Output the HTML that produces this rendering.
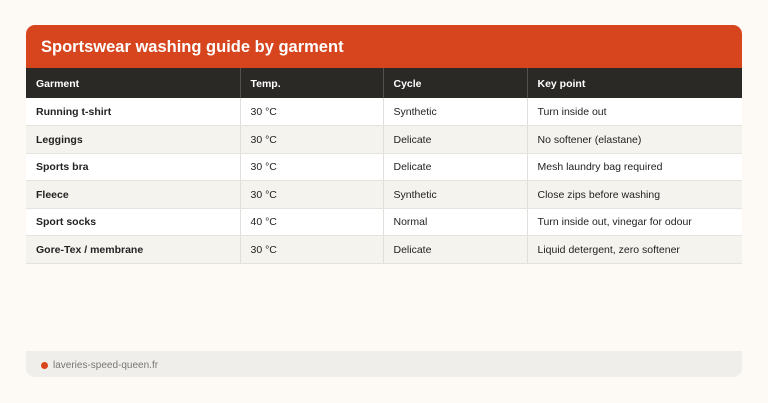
<!DOCTYPE html>
<html><head><style>
body{margin:0;width:768px;height:403px;background:#fdfaf6;font-family:"Liberation Sans",sans-serif;position:relative;overflow:hidden}
.hd{position:absolute;left:26px;top:25px;width:716px;height:43px;background:#d7451f;border-radius:9px 9px 0 0;color:#fff;font-weight:bold;font-size:16.5px;line-height:45px;box-sizing:border-box;padding-left:15px}
table{position:absolute;left:26px;top:68px;width:716px;border-collapse:collapse;font-size:10.5px;color:#222}
td,th{height:27.5px;padding:1px 0 0 10px;text-align:left;border-right:1px solid #e2dfda;border-bottom:1px solid #e6e3de;box-sizing:border-box}
th{background:#2b2926;color:#fff;font-weight:bold;height:30px;border-right:1px solid #55524d;border-bottom:none}
td:last-child,th:last-child{border-right:none}
tr:nth-child(odd) td{background:#f5f3ee}
tr:nth-child(even) td{background:#fff}
td:first-child{font-weight:bold}
.ft{position:absolute;left:26px;top:351px;width:716px;height:26px;background:#f0eeea;border-radius:0 0 9px 9px;font-size:10px;color:#777;line-height:29px;box-sizing:border-box;padding-left:27px}
.ft:before{content:"";position:absolute;left:15px;top:11px;width:7px;height:7px;border-radius:50%;background:#d7451f}
</style></head><body>
<div class="hd">Sportswear washing guide by garment</div>
<table>
<tr><th style="width:214px">Garment</th><th style="width:143px">Temp.</th><th style="width:144px">Cycle</th><th>Key point</th></tr>
<tr><td>Running t-shirt</td><td>30 °C</td><td>Synthetic</td><td>Turn inside out</td></tr>
<tr><td>Leggings</td><td>30 °C</td><td>Delicate</td><td>No softener (elastane)</td></tr>
<tr><td>Sports bra</td><td>30 °C</td><td>Delicate</td><td>Mesh laundry bag required</td></tr>
<tr><td>Fleece</td><td>30 °C</td><td>Synthetic</td><td>Close zips before washing</td></tr>
<tr><td>Sport socks</td><td>40 °C</td><td>Normal</td><td>Turn inside out, vinegar for odour</td></tr>
<tr><td>Gore-Tex / membrane</td><td>30 °C</td><td>Delicate</td><td>Liquid detergent, zero softener</td></tr>
</table>
<div class="ft">laveries-speed-queen.fr</div>
</body></html>
